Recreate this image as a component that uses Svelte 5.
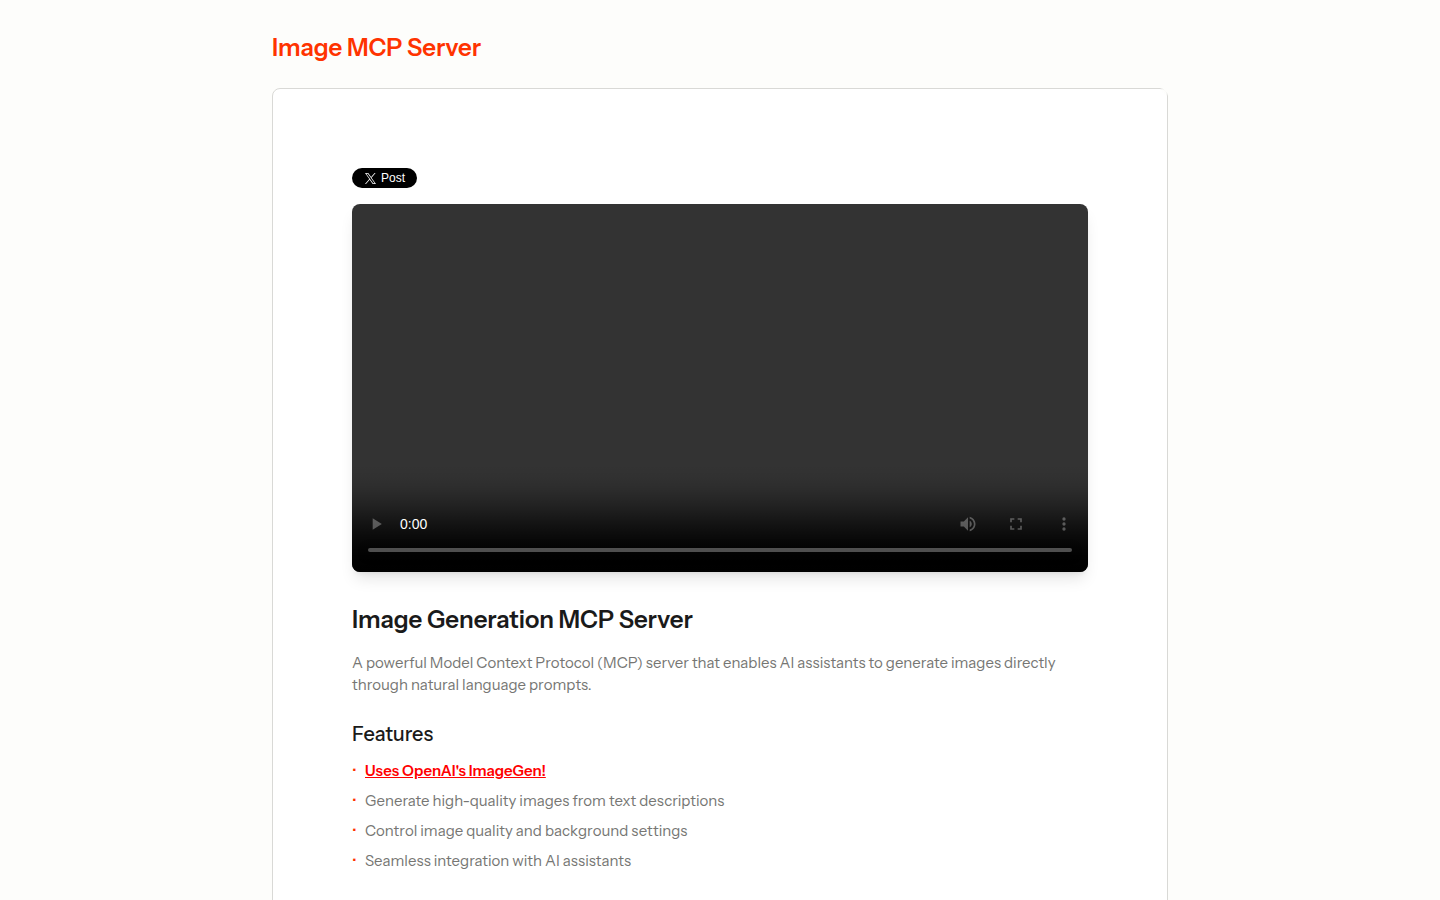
<script>
    const features = [
        'Generate high-quality images from text descriptions',
        'Control image quality and background settings',
        'Seamless integration with AI assistants'
    ];
</script>

<div class="page">
    <header>
        <h1>Image MCP Server</h1>
    </header>

    <main class="card">
        <a class="post" href="#post">
            <svg viewBox="0 0 24 24" aria-hidden="true">
                <path d="M14.258 10.152 23.176 0h-2.113l-7.747 8.813L7.133 0H0l9.352 13.328L0 23.973h2.113l8.176-9.309 6.531 9.309h7.133zm-2.895 3.293-.949-1.328L2.875 1.56h3.246l6.086 8.523.945 1.328 7.91 11.078h-3.246z" />
            </svg>
            <span>Post</span>
        </a>

        <!-- svelte-ignore a11y_media_has_caption -->
        <video controls></video>

        <h2>Image Generation MCP Server</h2>
        <p>
            A powerful Model Context Protocol (MCP) server that enables AI assistants to generate images directly
            through natural language prompts.
        </p>

        <h3>Features</h3>
        <ul>
            <li><a class="highlight" href="#imagegen">Uses OpenAI's ImageGen!</a></li>
            {#each features as feature}
                <li>{feature}</li>
            {/each}
        </ul>
    </main>
</div>

<style>
    :global(body) {
        background: #fdfdfb;
        font-family: 'Instrument Sans', Inter, sans-serif;
        font-size: 15px;
        line-height: 22px;
        color: #767673;
    }
    .page {
        max-width: 896px;
        margin: 0 auto;
        padding: 32px 16px;
    }
    h1, h2, h3, p, ul {
        margin: 0;
    }
    h1 {
        color: #ff3300;
        font-size: 24px;
        line-height: 32px;
        font-weight: 600;
    }
    .card {
        position: relative;
        margin-top: 24px;
        padding: 79px;
        background: #fff;
        border: 1px solid #d9d9d6;
        border-radius: 8px;
    }
    /* fades the border out at the top right corner */
    .card::after {
        content: '';
        position: absolute;
        top: -1px;
        right: -1px;
        width: 8px;
        height: 8px;
        background: radial-gradient(circle at top right, #fdfdfb 4px, transparent 8px);
    }
    .post {
        display: flex;
        align-items: center;
        gap: 5px;
        box-sizing: border-box;
        width: fit-content;
        height: 20px;
        padding: 0 12px 0 13px;
        border-radius: 10px;
        background: #000;
        color: #fff;
        font: 12px/20px 'Liberation Sans', Arial, sans-serif;
        text-decoration: none;
    }
    .post svg {
        width: 11px;
        height: 11px;
        fill: #fff;
    }
    video {
        display: block;
        width: 100%;
        aspect-ratio: 2 / 1;
        margin: 16px 0 32px;
        border-radius: 8px;
        box-shadow: 0 10px 15px -3px rgba(0, 0, 0, 0.1), 0 4px 6px -4px rgba(0, 0, 0, 0.1);
    }
    video::-webkit-media-controls-current-time-display {
        font-family: 'Liberation Sans', Arial, sans-serif;
    }
    h2 {
        color: #1a1a1a;
        font-size: 24px;
        line-height: 32px;
        font-weight: 600;
    }
    p {
        margin-top: 16px;
    }
    h3 {
        margin-top: 24px;
        color: #1a1a1a;
        font-size: 20px;
        line-height: 28px;
        font-weight: 500;
    }
    ul {
        display: flex;
        flex-direction: column;
        gap: 8px;
        margin-top: 12px;
        padding: 0;
        list-style: none;
    }
    li {
        display: flex;
        align-items: center;
        gap: 8px;
    }
    li::before {
        content: '•';
        width: 5px;
        color: #ff3300;
        font-size: 15px;
    }
    .highlight {
        color: #ff0000;
        font-weight: 600;
    }
</style>
